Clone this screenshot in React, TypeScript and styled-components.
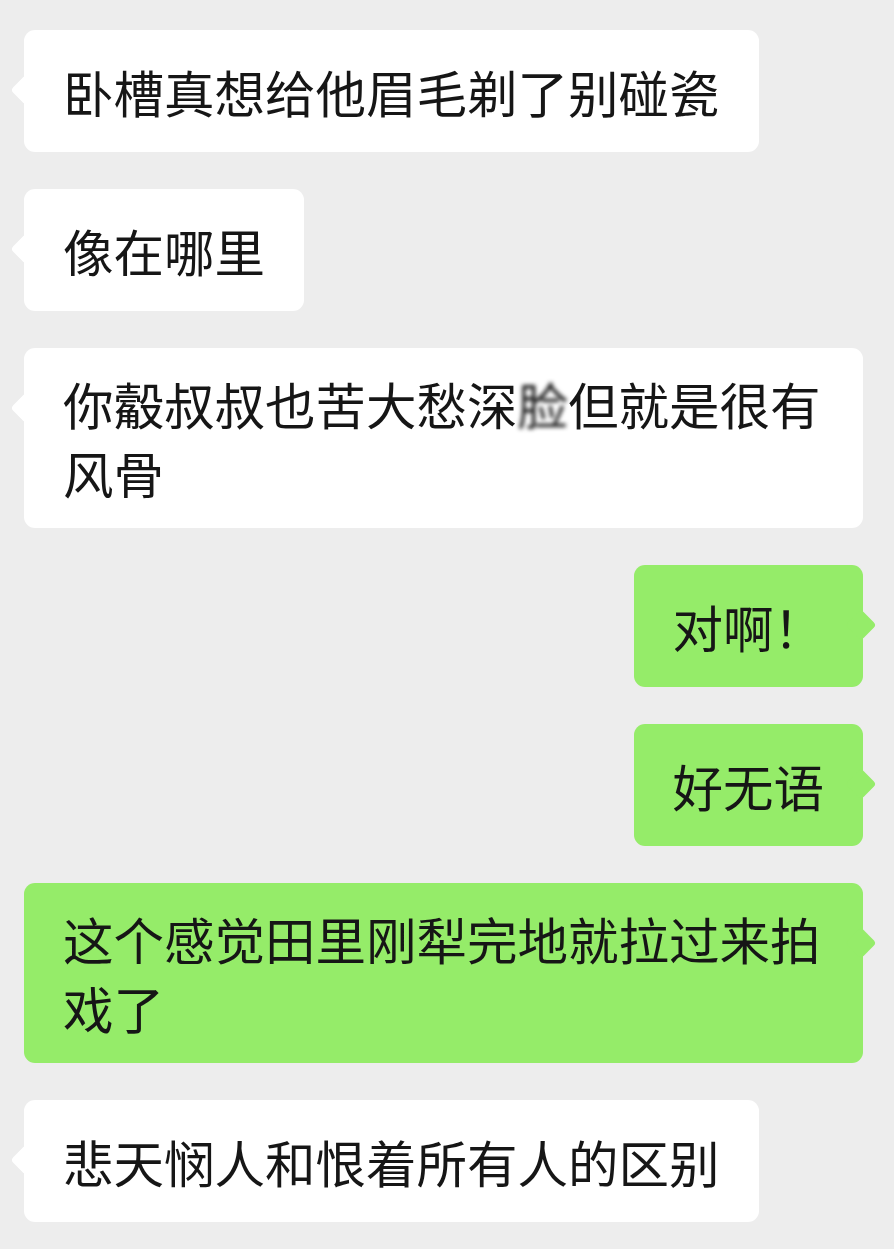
import React from "react";
import styled, { createGlobalStyle, css } from "styled-components";

const GlobalStyle = createGlobalStyle`
  html, body {
    margin: 0;
    padding: 0;
    background: #ededed;
  }
  body {
    font-family: "Noto Sans CJK SC", "Noto Sans", sans-serif;
    -webkit-font-smoothing: antialiased;
  }
`;

const Chat = styled.div`
  display: flex;
  flex-direction: column;
  gap: 37px;
  padding: 30px 31px 26px 24px;
  min-height: 1249px;
  box-sizing: border-box;
  background: #ededed;
`;

const Row = styled.div<{ $mine?: boolean }>`
  display: flex;
  justify-content: ${(p) => (p.$mine ? "flex-end" : "flex-start")};
`;

const Bubble = styled.div<{ $mine?: boolean }>`
  position: relative;
  box-sizing: border-box;
  max-width: 840px;
  min-height: 122px;
  display: flex;
  align-items: center;
  padding: 21px 39px;
  border-radius: 11px;
  font-size: 50.5px;
  line-height: 69px;
  color: #161616;
  background: ${(p) => (p.$mine ? "#95ec69" : "#ffffff")};
  word-break: break-all;

  &::before {
    content: "";
    position: absolute;
    top: 49px;
    width: 22px;
    height: 22px;
    border-radius: 4px;
    background: inherit;
    transform: rotate(45deg);
    ${(p) =>
      p.$mine
        ? css`
            right: -9px;
          `
        : css`
            left: -9px;
          `}
  }
`;

const Text = styled.span`
  position: relative;
  z-index: 1;
`;

const Blurred = styled.span`
  display: inline-block;
  filter: blur(2px);
`;

type Msg = { mine?: boolean; content: React.ReactNode };

const messages: Msg[] = [
  { content: "卧槽真想给他眉毛剃了别碰瓷" },
  { content: "像在哪里" },
  {
    content: (
      <>
        你觳叔叔也苦大愁深<Blurred>脸</Blurred>但就是很有风骨
      </>
    ),
  },
  { mine: true, content: "对啊！" },
  { mine: true, content: "好无语" },
  { mine: true, content: "这个感觉田里刚犁完地就拉过来拍戏了" },
  { content: "悲天悯人和恨着所有人的区别" },
];

export default function App() {
  return (
    <>
      <GlobalStyle />
      <Chat>
        {messages.map((m, i) => (
          <Row key={i} $mine={m.mine}>
            <Bubble $mine={m.mine}>
              <Text>{m.content}</Text>
            </Bubble>
          </Row>
        ))}
      </Chat>
    </>
  );
}
